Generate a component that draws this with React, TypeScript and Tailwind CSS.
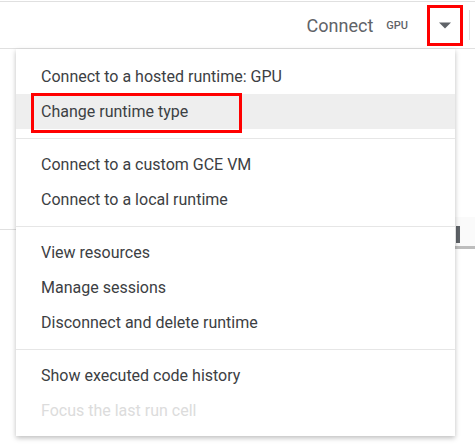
const groups: { label: string; disabled?: boolean; marked?: boolean; active?: boolean }[][] = [
  [{ label: "Connect to a hosted runtime: GPU" }, { label: "Change runtime type", active: true, marked: true }],
  [{ label: "Connect to a custom GCE VM" }, { label: "Connect to a local runtime" }],
  [{ label: "View resources" }, { label: "Manage sessions" }, { label: "Disconnect and delete runtime" }],
  [{ label: "Show executed code history" }, { label: "Focus the last run cell", disabled: true }],
];

const App = () => {
  return (
    <div
      className="relative w-[475px] h-[445px] overflow-hidden bg-white"
      style={{ fontFamily: "Roboto, 'Liberation Sans', sans-serif" }}
    >
      {/* top toolbar */}
      <div className="mt-px h-[48px] border-t border-b border-[#e0e0e0] flex items-center justify-end">
        <span className="text-[18px] text-[#5f6368] mr-[13px]">Connect</span>
        <span className="text-[11px] font-medium text-[#5f6368] mr-[19px] pt-[3px]">GPU</span>
        <button className="w-[36px] h-[41px] border-[3px] border-[#ff0000] flex items-center justify-center mr-[6px]">
          <svg width="14" height="7" viewBox="0 0 14 7">
            <path d="M1 0.5h12L7 6.5z" fill="#5f6368" />
          </svg>
        </button>
        <div className="w-px h-[30px] bg-[#e0e0e0] mr-[5px]" />
      </div>

      {/* notebook behind the menu */}
      <div className="flex mt-[180px]">
        <div className="w-[16px] border-t border-[#e0e0e0]" />
        <div className="flex-1" />
        <div className="w-[20px] h-[32px] border-b-[3px] border-[#bdbdbd] bg-[#fafafa] pl-px pt-[9px] -mt-[12px]">
          <div className="w-[4px] h-[17px] bg-[#5f6368]" />
        </div>
      </div>

      {/* dropdown menu */}
      <div className="absolute left-[16px] top-[49px] w-[439px] bg-white pt-[10px] pb-2 shadow-[0_2px_5px_rgba(0,0,0,0.26)]">
        {groups.map((g, gi) => (
          <div key={gi}>
            {gi > 0 && <div className="h-px bg-[#e6e6e6] mt-[9px] mb-[8px]" />}
            {g.map((it) => (
              <div
                key={it.label}
                className={`relative h-[35px] flex items-center px-[25px] text-[16px] ${
                  it.active ? "bg-[#eeeeee]" : ""
                } ${it.disabled ? "text-[#dcdcdc]" : "text-[#3c4043]"}`}
              >
                {it.label}
                {it.marked && (
                  <div className="absolute left-[15px] top-[-1px] w-[211px] h-[40px] border-[3px] border-[#ff0000]" />
                )}
              </div>
            ))}
          </div>
        ))}
      </div>
    </div>
  );
};

export default App;
